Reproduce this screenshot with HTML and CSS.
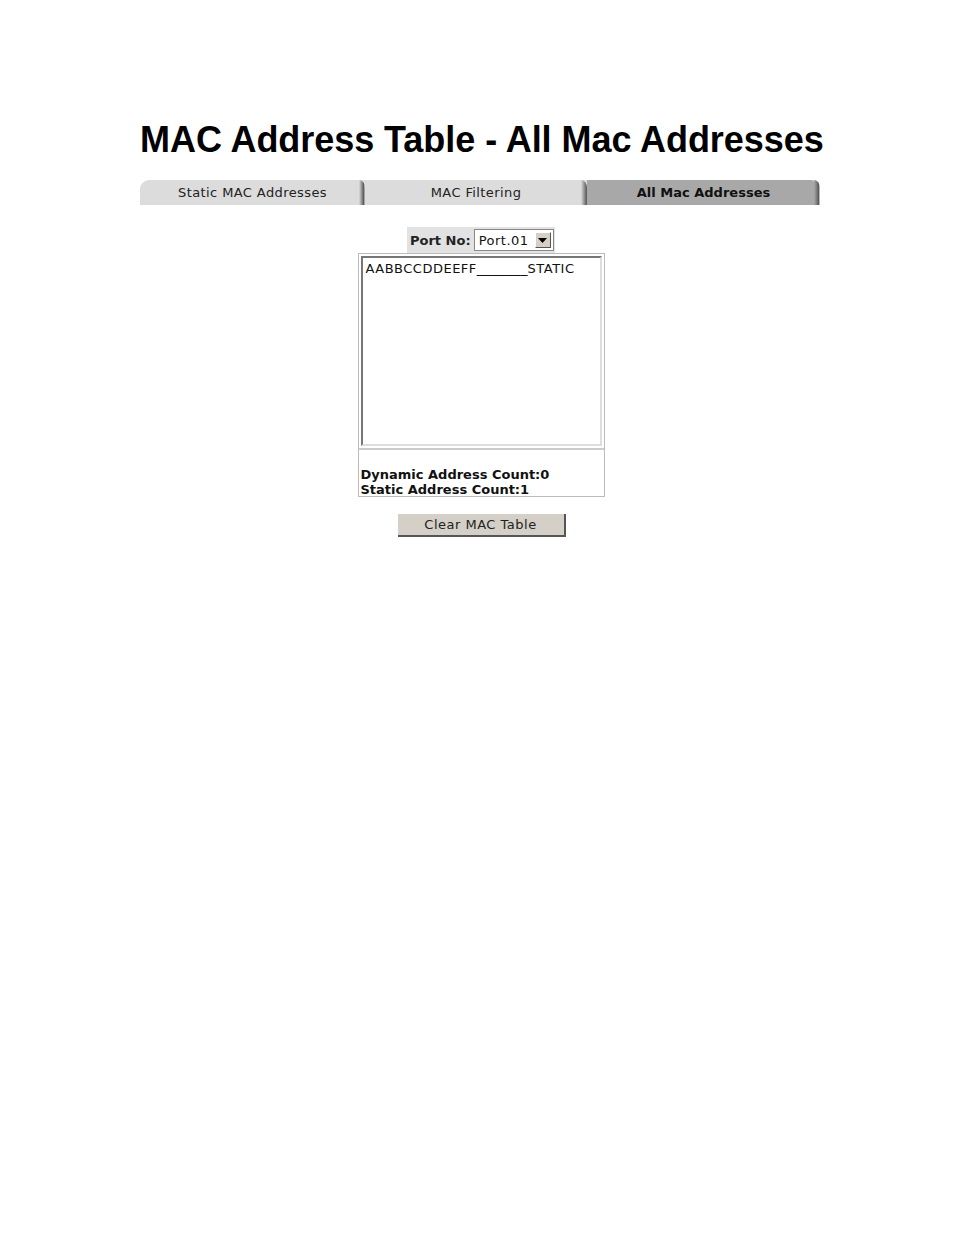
FILE: index.html
```html
<!DOCTYPE html>
<html>
<head>
<meta charset="utf-8">
<link rel="stylesheet" href="styles.css">
</head>
<body>
<div class="page">
  <h1 class="title">MAC Address Table - All Mac Addresses</h1>
  <div class="tabs">
    <div class="tab tab1">Static MAC Addresses<span class="edge"></span></div>
    <div class="tab tab2">MAC Filtering<span class="edge"></span></div>
    <div class="tab tab3 active">All Mac Addresses<span class="edge"></span></div>
  </div>
  <div class="panel">
    <div class="port">
      <span class="port-label">Port No:</span>
      <span class="select"><span class="select-text">Port.01</span><span class="select-btn"><svg width="9" height="5" viewBox="0 0 9 5"><path d="M0 0H9L4.5 5Z" fill="#000"/></svg></span></span>
    </div>
    <div class="box">
      <div class="list">AABBCCDDEEFF<span class="under">_______</span>STATIC</div>
      <div class="counts">
        <div>Dynamic Address Count:0</div>
        <div>Static Address Count:1</div>
      </div>
    </div>
    <div class="btn-row"><span class="btn">Clear MAC Table</span></div>
  </div>
</div>
</body>
</html>
```

FILE: styles.css
```css
html, body {
  margin: 0;
  padding: 0;
  background: #fff;
}
.page {
  width: 680px;
  margin-left: 140px;
  padding-top: 119px;
}
.title {
  margin: 0;
  font-family: "Liberation Sans", Arial, sans-serif;
  font-weight: bold;
  font-size: 36px;
  letter-spacing: -0.05px;
  line-height: 42px;
  color: #000;
  white-space: nowrap;
}
.tabs {
  display: flex;
  margin-top: 19px;
  height: 25px;
}
.tab {
  position: relative;
  height: 25px;
  line-height: 26px;
  text-align: center;
  font-family: "DejaVu Sans", Verdana, sans-serif;
  font-size: 13px;
  letter-spacing: 0.4px;
  color: #222;
  background: #dcdcdc;
  box-sizing: border-box;
}
.tab1 { width: 225px; border-top-left-radius: 9px; }
.tab2 { width: 222px; }
.tab3 { width: 233px; border-top-right-radius: 9px; }
.tab.active {
  background: #a8a8a8;
  font-weight: bold;
  letter-spacing: 0;
  color: #111;
}
.edge {
  position: absolute;
  right: 0;
  top: 0;
  width: 6px;
  height: 25px;
  border-top-right-radius: 6px 8px;
}
.tab1 .edge { background: linear-gradient(to right, #dcdcdc 0, #999 40%, #555 80%, #ddd 100%); }
.tab2 .edge { background: linear-gradient(to right, #dcdcdc 0, #888 60%, #555 100%); }
.tab3 .edge { background: linear-gradient(to right, #a8a8a8 0, #777 50%, #555 80%, #fff 100%); }
.panel {
  display: flex;
  flex-direction: column;
  align-items: center;
  padding-top: 22px;
}
.port {
  display: flex;
  align-items: center;
  background: #e2e2e2;
  padding: 0 1px 0 3px;
  height: 26px;
  width: 148px;
  box-sizing: border-box;
  margin-left: 2px;
  white-space: nowrap;
}
.port-label {
  font-family: "DejaVu Sans", Verdana, sans-serif;
  font-weight: bold;
  font-size: 13px;
  color: #222;
  margin-right: 3px;
  flex-shrink: 0;
}
.select {
  display: flex;
  align-items: center;
  background: #fff;
  border: 1px solid #888;
  height: 22px;
  box-sizing: border-box;
  width: 80px;
  flex-shrink: 0;
}
.select-text {
  font-family: "DejaVu Sans", Verdana, sans-serif;
  font-size: 13px;
  letter-spacing: 0.5px;
  color: #111;
  padding-left: 4px;
  flex: 1;
}
.select-btn {
  width: 16px;
  height: 16px;
  margin-right: 2px;
  background: #d4d0c8;
  border: 1px solid #fff;
  border-right-color: #555;
  border-bottom-color: #555;
  box-sizing: border-box;
  display: flex;
  align-items: center;
  justify-content: center;
}
.box {
  width: 247px;
  border: 1px solid #bbb;
  box-sizing: border-box;
  padding: 2px 2px 0 2px;
  margin-left: 2px;
}
.list {
  height: 190px;
  border: 2px solid #777;
  border-right-color: #ddd;
  border-bottom-color: #ddd;
  box-sizing: border-box;
  font-family: "DejaVu Sans", Verdana, sans-serif;
  font-size: 13px;
  letter-spacing: 0.5px;
  color: #111;
  padding: 3px 0 0 3px;
  line-height: 15px;
  white-space: nowrap;
}
.under {
  font-size: 14.5px;
  letter-spacing: 0;
  line-height: 15px;
}
.counts {
  border-top: 2px solid #ccc;
  margin: 2px -2px 0 -2px;
  padding: 17px 0 0 2px;
  font-family: "DejaVu Sans", Verdana, sans-serif;
  font-weight: bold;
  font-size: 13px;
  line-height: 15px;
  color: #111;
  height: 48px;
  box-sizing: border-box;
}
.btn-row {
  padding-top: 17px;
  margin-left: 3px;
}
.btn {
  display: inline-block;
  width: 168px;
  height: 23px;
  box-sizing: border-box;
  background: #d4d0c8;
  border-right: 2px solid #555;
  border-bottom: 2px solid #555;
  text-align: center;
  font-family: "DejaVu Sans", Verdana, sans-serif;
  font-size: 13px;
  letter-spacing: 0.5px;
  line-height: 21px;
  color: #222;
}
```
